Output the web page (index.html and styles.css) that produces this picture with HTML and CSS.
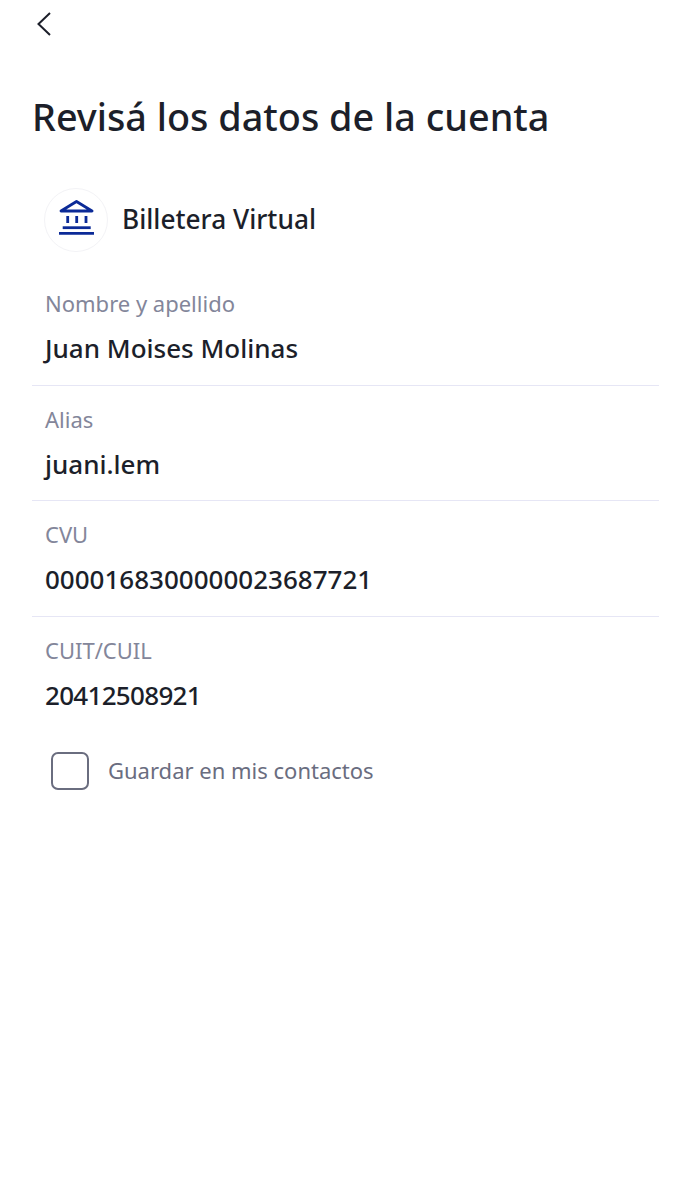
FILE: index.html
```html
<!DOCTYPE html>
<html>
<head>
  <meta charset="utf-8">
  <title>Revisá los datos de la cuenta</title>
  <link rel="stylesheet" href="styles.css">
</head>
<body>
  <div class="container">
    <div class="topbar">
      <svg class="back-icon" width="16" height="24" viewBox="0 0 16 24" fill="none">
        <path d="M14 1 L2.500 12 L14 23" stroke="#1c1f2a" stroke-width="2"/>
      </svg>
    </div>

    <h1>Revisá los datos de la cuenta</h1>

    <div class="bank">
      <div class="bank-logo">
        <svg width="40" height="40" viewBox="0 0 40 40" fill="none" stroke="#0b2a97" stroke-width="2.800">
          <path d="M5 11 L20.500 1.500 L36 11 Z" stroke-linejoin="round"/>
          <path d="M11.700 16 V23 M20.700 16 V23 M30 16 V23"/>
          <path d="M6.700 27.700 H34.700"/>
          <path d="M3 33.300 H38"/>
        </svg>
      </div>
      <span class="bank-name">Billetera Virtual</span>
    </div>

    <div class="field">
      <div class="field-label">Nombre y apellido</div>
      <div class="field-value">Juan Moises Molinas</div>
    </div>
    <div class="field">
      <div class="field-label">Alias</div>
      <div class="field-value">juani.lem</div>
    </div>
    <div class="field">
      <div class="field-label">CVU</div>
      <div class="field-value">0000168300000023687721</div>
    </div>
    <div class="field field-last">
      <div class="field-label">CUIT/CUIL</div>
      <div class="field-value field-value-tight">20412508921</div>
    </div>

    <label class="save-contact">
      <span class="checkbox"></span>
      <span class="save-text">Guardar en mis contactos</span>
    </label>
  </div>
</body>
</html>
```

FILE: styles.css
```css
body {
  margin: 0;
  padding: 0;
  font-family: 'Noto Sans', sans-serif;
  background-color: white;
  color: #1c1f2a;
}

.container {
  padding: 0 32px;
  height: 1200px;
  box-sizing: border-box;
}

.topbar {
  height: 48px;
  padding-top: 12px;
  padding-left: 4px;
  box-sizing: border-box;
}

.back-icon {
  display: block;
}

h1 {
  font-size: 37.8px;
  font-weight: 500;
  line-height: 50px;
  margin: 44px 0 0 0;
  color: #1c1f2a;
}

/* Bank row */
.bank {
  display: flex;
  align-items: center;
  gap: 14px;
  margin-top: 46px;
  margin-bottom: 18px;
  padding-left: 12px;
}

.bank-logo {
  width: 64px;
  height: 64px;
  border: 1px solid #f3f3f6;
  border-radius: 50%;
  box-sizing: border-box;
  display: flex;
  align-items: center;
  justify-content: center;
}

.bank-name {
  font-size: 26.25px;
  font-weight: 500;
  padding-bottom: 2px;
}

/* Account fields */
.field {
  height: 115.5px;
  padding: 18px 13px 0;
  border-bottom: 1px solid #e6e6f5;
  box-sizing: border-box;
}

.field-last {
  border-bottom: none;
}

.field-label {
  font-size: 22px;
  line-height: 30px;
  color: #83869a;
}

.field-value {
  font-size: 26px;
  font-weight: 500;
  line-height: 36px;
  margin-top: 12px;
}

.field-value-tight {
  letter-spacing: -0.7px;
}

/* Save contact */
.save-contact {
  display: flex;
  align-items: center;
  gap: 19px;
  padding-left: 19px;
  margin-top: 20px;
}

.checkbox {
  width: 38px;
  height: 38px;
  border: 2px solid #6a6d7f;
  border-radius: 7px;
  box-sizing: border-box;
}

.save-text {
  font-size: 22px;
  color: #6a6d7f;
  padding-bottom: 2px;
}
```
